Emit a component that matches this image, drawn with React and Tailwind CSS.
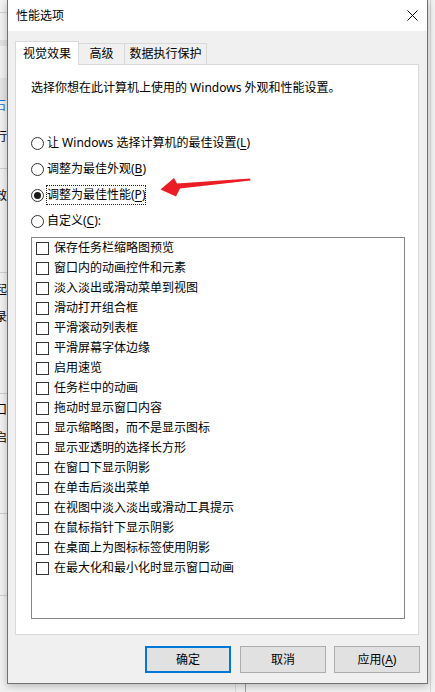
import React from "react";

const items = [
  "保存任务栏缩略图预览",
  "窗口内的动画控件和元素",
  "淡入淡出或滑动菜单到视图",
  "滑动打开组合框",
  "平滑滚动列表框",
  "平滑屏幕字体边缘",
  "启用速览",
  "任务栏中的动画",
  "拖动时显示窗口内容",
  "显示缩略图，而不是显示图标",
  "显示亚透明的选择长方形",
  "在窗口下显示阴影",
  "在单击后淡出菜单",
  "在视图中淡入淡出或滑动工具提示",
  "在鼠标指针下显示阴影",
  "在桌面上为图标标签使用阴影",
  "在最大化和最小化时显示窗口动画",
];

function Radio({ checked }) {
  return (
    <span className="w-[13px] h-[13px] shrink-0 rounded-full border border-[#333333] bg-white flex items-center justify-center">
      {checked && <span className="w-[7px] h-[7px] rounded-full bg-[#1a1a1a]" />}
    </span>
  );
}

function U({ children }) {
  return <span className="underline underline-offset-[2px]">{children}</span>;
}

export default function App() {
  return (
    <div className="relative w-[435px] h-[692px] overflow-hidden bg-[#f2f2f2] font-['Noto_Sans','Noto_Sans_CJK_SC',sans-serif] text-[12px] text-black">
      {/* background window fragments */}
      <div className="absolute left-0 top-[12px] w-[7px] h-px bg-[#d0d0d0]" />
      <div className="absolute left-0 top-[40px] w-[7px] h-[6px] bg-[#e2e2e2]" />
      <div className="absolute left-0 top-[78px] w-[7px] h-[22px] bg-[#e5e5e5]" />
      <div className="absolute left-0 top-[168px] w-[7px] h-px bg-[#d0d0d0]" />
      <div className="absolute left-0 top-[272px] w-[7px] h-px bg-[#d0d0d0]" />
      <div className="absolute left-0 top-[393px] w-[7px] h-px bg-[#d0d0d0]" />
      <div className="absolute left-0 top-[513px] w-[7px] h-px bg-[#d0d0d0]" />
      <div className="absolute left-0 top-[595px] w-[7px] h-px bg-[#d0d0d0]" />
      <div className="absolute left-[-6px] top-[99px] leading-[14px] text-[#1a73c8]">石</div>
      <div className="absolute left-[-5px] top-[130px] leading-[14px]">行</div>
      <div className="absolute left-[-5px] top-[189px] leading-[14px]">效</div>
      <div className="absolute left-[-5px] top-[283px] leading-[14px]">起</div>
      <div className="absolute left-[-5px] top-[310px] leading-[14px]">录</div>
      <div className="absolute left-[-5px] top-[403px] leading-[14px]">口</div>
      <div className="absolute left-[-5px] top-[431px] leading-[14px]">启</div>
      <div className="absolute left-[430px] top-0 w-px h-[692px] bg-[#d8d8d8]" />
      <div className="absolute left-[235px] top-[684px] w-px h-[8px] bg-[#d8d8d8]" />
      <div className="absolute left-[245px] top-[684px] w-px h-[8px] bg-[#a0a0a0]" />

      {/* dialog */}
      <div className="absolute left-[7px] top-0 w-[421px] h-[684px] border-x border-b border-[#707070] bg-[#f0f0f0] shadow-[0_2px_8px_rgba(0,0,0,0.25)] flex flex-col">
        {/* title bar */}
        <div className="h-[31px] shrink-0 bg-white flex items-center justify-between pl-[8px] pr-[9px]">
          <span className="leading-[16px]">性能选项</span>
          <svg width="11" height="11" viewBox="0 0 11 11" className="block">
            <path d="M0.5 0.5 L10.5 10.5 M10.5 0.5 L0.5 10.5" stroke="#000" strokeWidth="1" />
          </svg>
        </div>

        {/* body */}
        <div className="flex flex-col pt-[10px] pl-[7px] pr-[8px]">
          {/* tabs */}
          <div className="flex items-end h-[23px]">
            <div className="relative z-10 w-[64px] h-[24px] -mb-px bg-white border-x border-t border-[#d9d9d9] flex items-center justify-center">
              视觉效果
            </div>
            <div className="w-[46px] h-[21px] border-r border-t border-[#d9d9d9] flex items-center justify-center">
              高级
            </div>
            <div className="w-[82px] h-[21px] border-r border-t border-[#d9d9d9] flex items-center justify-center">
              数据执行保护
            </div>
          </div>

          {/* panel */}
          <div className="h-[571px] bg-white border border-[#d9d9d9] pl-[15px] pr-[13px] flex flex-col">
            <div className="mt-[15px] leading-[16px]">选择你想在此计算机上使用的 Windows 外观和性能设置。</div>

            <div className="mt-[37px] flex flex-col gap-[6px]">
              <div className="h-[20px] flex items-center">
                <Radio />
                <span className="ml-[3px] leading-[16px]">让 Windows 选择计算机的最佳设置(<U>L</U>)</span>
              </div>
              <div className="h-[20px] flex items-center">
                <Radio />
                <span className="ml-[3px] leading-[16px]">调整为最佳外观(<U>B</U>)</span>
              </div>
              <div className="h-[20px] flex items-center">
                <Radio checked />
                <span className="ml-[2px] h-[20px] flex items-center border border-dotted border-[#222]">调整为最佳性能(<U>P</U>)</span>
              </div>
              <div className="h-[20px] flex items-center">
                <Radio />
                <span className="ml-[3px] leading-[16px]">自定义(<U>C</U>):</span>
              </div>
            </div>

            <div className="mt-[6px] h-[382px] border border-[#828790] bg-white flex flex-col pl-[4px]">
              {items.map((t) => (
                <div key={t} className="h-[20px] shrink-0 flex items-center">
                  <span className="w-[13px] h-[13px] shrink-0 border border-[#333333] bg-white" />
                  <span className="ml-[5px] leading-[16px]">{t}</span>
                </div>
              ))}
            </div>
          </div>
        </div>

        {/* buttons */}
        <div className="mt-[11px] h-[27px] flex pl-[137px]">
          <div className="w-[86px] h-[27px] border-2 border-[#0078d7] bg-[#e1e1e1] flex items-center justify-center">确定</div>
          <div className="ml-[9px] w-[86px] h-[27px] border border-[#adadad] bg-[#e1e1e1] flex items-center justify-center">取消</div>
          <div className="ml-[8px] w-[86px] h-[27px] border border-[#adadad] bg-[#e1e1e1] flex items-center justify-center">应用(<U>A</U>)</div>
        </div>
      </div>

      {/* red arrow annotation */}
      <svg className="absolute left-[150px] top-[170px]" width="110" height="35" viewBox="0 0 110 35">
        <polygon
          points="10.5,19.5 24,8 27,13.5 100,8.5 100.5,10.5 30,18.5 26,26.5"
          fill="#ea1d25"
        />
      </svg>
    </div>
  );
}
